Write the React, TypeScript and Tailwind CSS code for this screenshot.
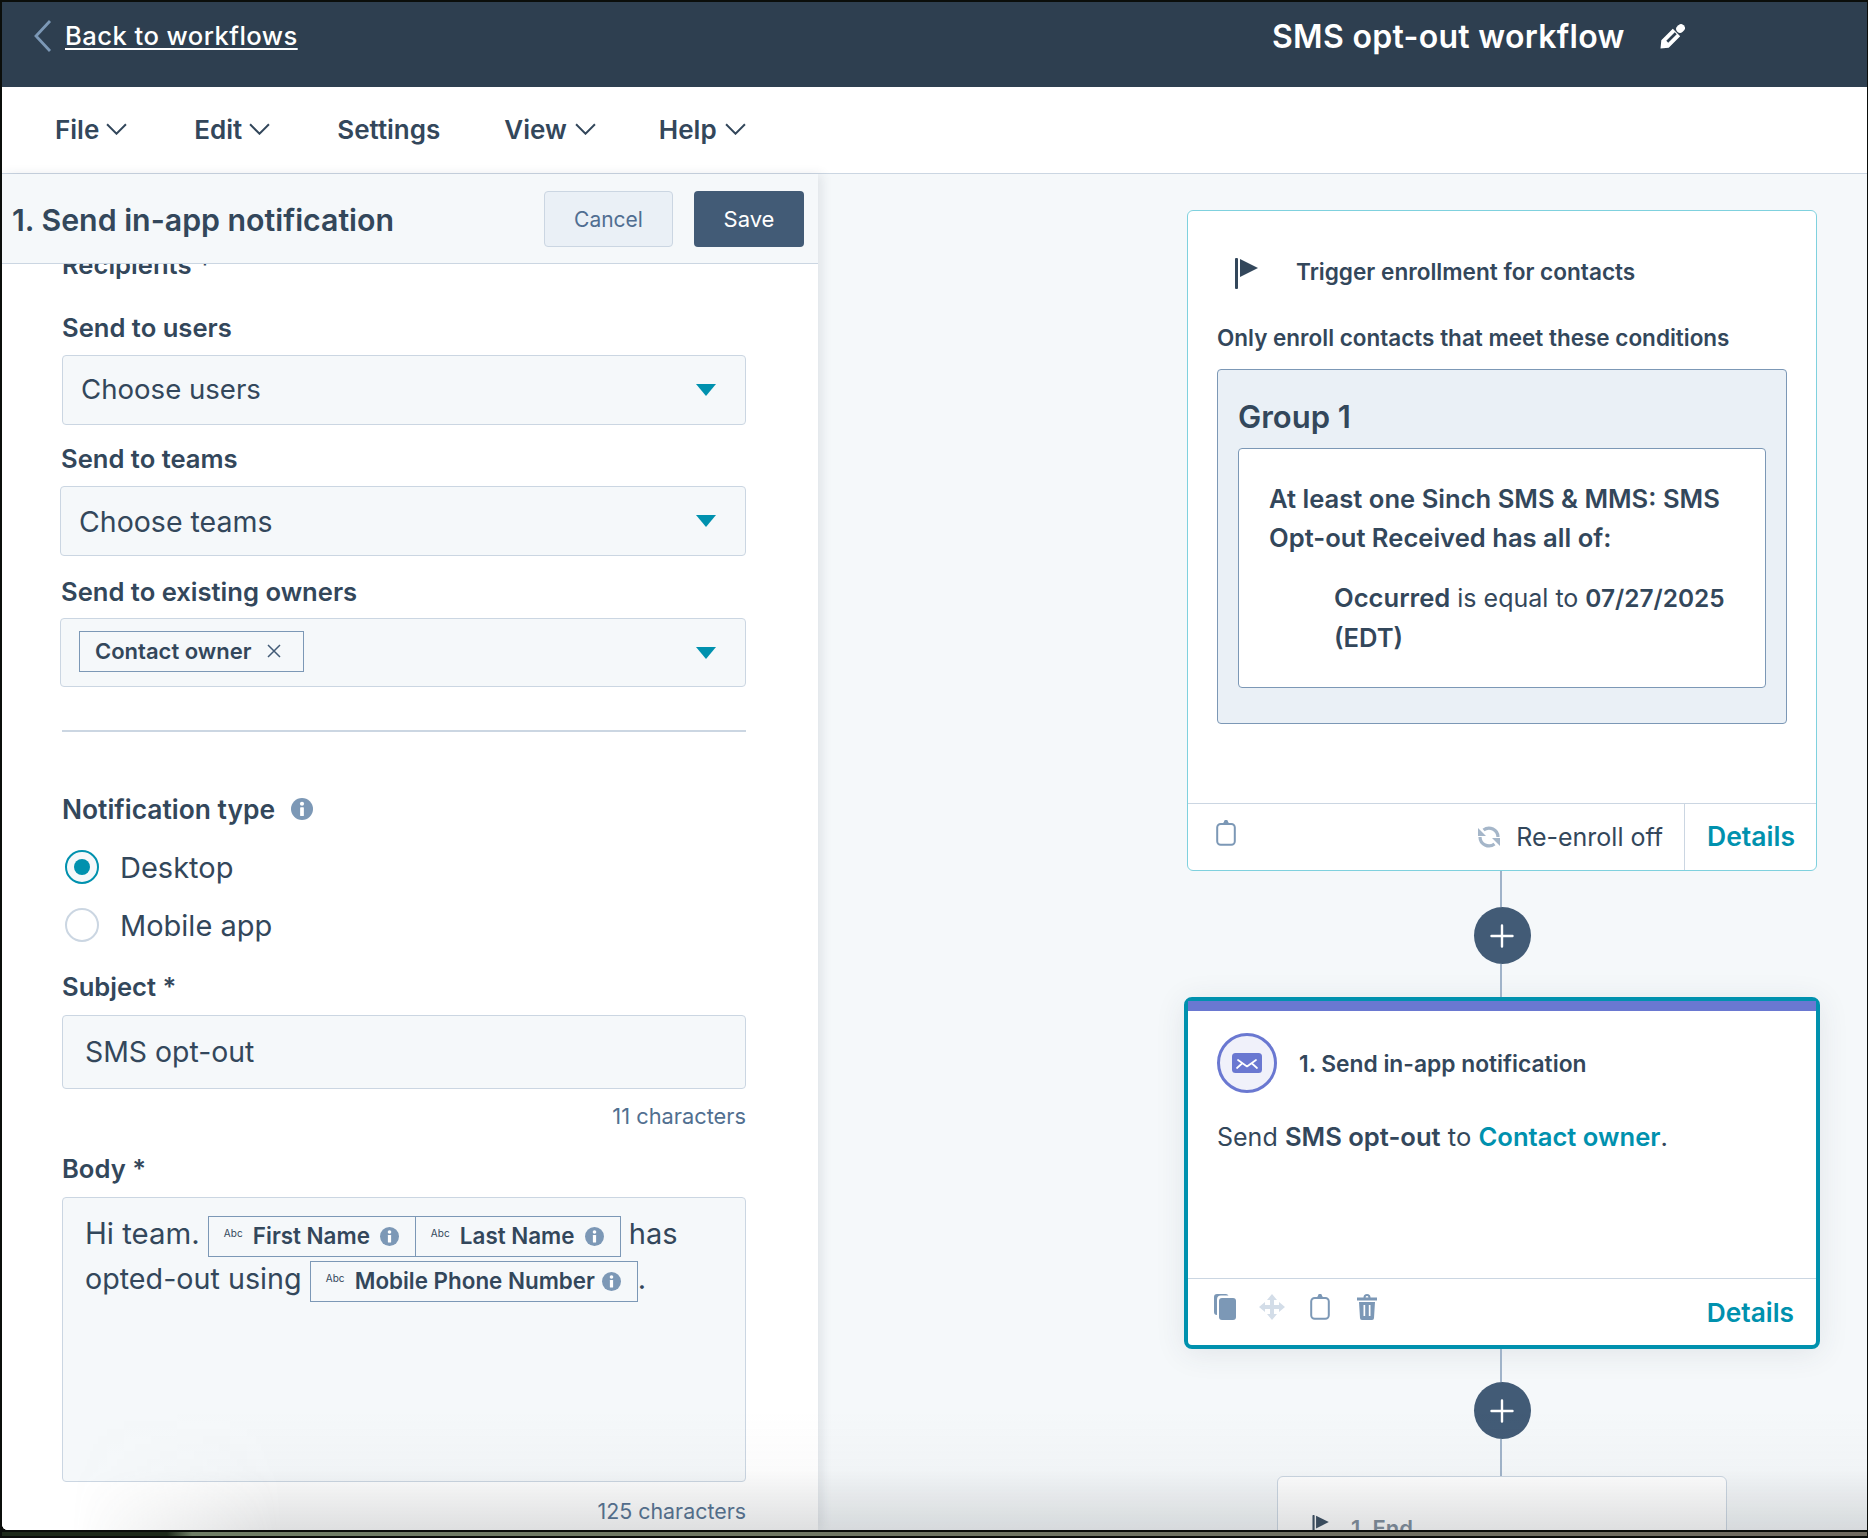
import React from "react";

const Chevron = ({ className = "" }: { className?: string }) => (
  <svg viewBox="0 0 20 11" className={className} fill="none" stroke="currentColor" strokeWidth="1.9">
    <path d="M1 1 L10 10 L19 1" />
  </svg>
);

const Caret = ({ className = "" }: { className?: string }) => (
  <svg viewBox="0 0 20 12" className={`w-[20px] h-[12px] text-[#0091ae] ${className}`} fill="currentColor">
    <path d="M0 0 H20 L10 12 Z" />
  </svg>
);

const Info = ({ className = "" }: { className?: string }) => (
  <svg viewBox="0 0 20 20" className={className}>
    <circle cx="10" cy="10" r="10" fill="#7c98b6" />
    <circle cx="10" cy="5.2" r="1.9" fill="#fff" />
    <rect x="8.3" y="8.4" width="3.4" height="8" rx="0.6" fill="#fff" />
  </svg>
);

const Clipboard = ({ className = "" }: { className?: string }) => (
  <svg viewBox="0 0 20 26" className={className} fill="none" stroke="#7c98b6" strokeWidth="2">
    <rect x="1.2" y="4" width="17.6" height="20.8" rx="3.5" />
    <path d="M6.5 4 L8 1.8 A2 2 0 0 1 12 1.8 L13.5 4 Z" fill="#7c98b6" stroke="none" />
  </svg>
);

const Flag = ({ className = "" }: { className?: string }) => (
  <svg viewBox="0 0 24 31" className={className} fill="#33475b">
    <rect x="0" y="0" width="3" height="31" rx="1" />
    <path d="M5 1 L23 10 L5 19 Z" />
  </svg>
);

const Plus = () => (
  <div className="w-[57px] h-[57px] rounded-full bg-[#425b76] flex items-center justify-center shrink-0">
    <svg viewBox="0 0 24 24" className="w-[24px] h-[24px]" stroke="#fff" strokeWidth="2.4" strokeLinecap="round">
      <path d="M12 1.5 V22.5 M1.5 12 H22.5" />
    </svg>
  </div>
);

const Label = ({ children, className = "", high = false }: { children: React.ReactNode; className?: string; high?: boolean }) => (
  <div className={`h-[30px] ${high ? "leading-[29px]" : "leading-[31px]"} text-[25.6px] font-semibold text-[#33475b] whitespace-nowrap ${className}`}>{children}</div>
);

const Select = ({ text, className = "", textClass = "" }: { text: string; className?: string; textClass?: string }) => (
  <div className={`flex items-center justify-between rounded-[4px] border border-[#cbd6e2] bg-[#f5f8fa] pr-[29px] ${className}`}>
    <span className={`text-[#33475b] ${textClass}`}>{text}</span>
    <Caret />
  </div>
);

const Chip = ({ name, className = "" }: { name: string; className?: string }) => (
  <span className={`inline-flex items-center h-[41px] border border-[#7c98b6] pl-[15px] pr-[16px] align-top mt-[4px] ${className}`}>
    <span className="text-[10px] leading-none text-[#33475b] -mt-[8px] w-[22px] shrink-0">Abc</span>
    <span className="text-[22.4px] font-semibold text-[#33475b] leading-none ml-[7px] whitespace-nowrap grow">{name}</span>
    <Info className="w-[19px] h-[19px] shrink-0 ml-[4px]" />
  </span>
);

export default function App() {
  return (
    <div className="relative w-[1868px] h-[1538px] overflow-hidden bg-[#0b0e0b] pt-[2px] pl-[2px] pr-[1px] font-['Inter','Liberation_Sans',sans-serif] text-[#33475b]">
      <div className="w-[1865px] h-[1528px] bg-white flex flex-col overflow-hidden rounded-bl-[6px]">
        {/* top bar */}
        <header className="h-[85px] shrink-0 bg-[#2e3f50] flex text-white">
          <div className="flex items-start pl-[32px] pt-[18px] w-[1270px]">
            <svg viewBox="0 0 18 32" className="w-[18px] h-[32px]" fill="none" stroke="#7c98b6" strokeWidth="2.8">
              <path d="M16 1 L2 16 L16 31" />
            </svg>
            <a className="ml-[13px] text-[25.6px] leading-[32px] font-medium underline underline-offset-[3px] decoration-2 tracking-[0.45px]">Back to workflows</a>
          </div>
          <div className="flex items-start pt-[16px]">
            <span className="text-[32px] leading-[38px] font-semibold whitespace-nowrap tracking-[0.3px]">SMS opt-out workflow</span>
            <svg viewBox="0 0 25 25" className="ml-[35px] mt-[6px] w-[25px] h-[25px]" fill="#fff">
              <path d="M12.8 4.8 L20.2 12.2 L8.7 23.7 L0.5 24.5 L1.3 16.3 Z M14.8 8.3 L6.3 16.8 L8.2 18.7 L16.7 10.2 Z" fillRule="evenodd" />
              <line x1="20" y1="5" x2="21" y2="4" stroke="#fff" strokeWidth="7.6" strokeLinecap="round" />
            </svg>
          </div>
        </header>

        {/* menu */}
        <nav className="h-[87px] shrink-0 bg-white border-b border-[#cbd6e2] flex items-center pl-[53px] pb-[2px] text-[26px] font-semibold text-[#33475b]">
          <span>File</span>
          <Chevron className="w-[21px] h-[12px] ml-[7px] mr-[67px]" />
          <span>Edit</span>
          <Chevron className="w-[21px] h-[12px] ml-[7px] mr-[67px]" />
          <span className="mr-[64px]">Settings</span>
          <span>View</span>
          <Chevron className="w-[21px] h-[12px] ml-[8px] mr-[63px]" />
          <span>Help</span>
          <Chevron className="w-[21px] h-[12px] ml-[8px]" />
        </nav>

        <div className="flex flex-1 min-h-0 bg-[#f5f8fa]">
          {/* left panel */}
          <aside className="relative z-10 w-[816px] shrink-0 bg-white flex flex-col shadow-[4px_0_10px_rgba(45,62,80,0.10)]">
            <div className="h-[90px] shrink-0 bg-[#f5f8fa] border-b border-[#cbd6e2] flex items-center pl-[10px] relative z-10">
              <h1 className="text-[30.3px] font-semibold text-[#33475b] whitespace-nowrap mt-[4px]">1. Send in-app notification</h1>
              <div className="ml-auto flex gap-[21px] mr-[14px] mt-[1px]">
                <button className="w-[129px] h-[56px] rounded-[4px] border border-[#cbd6e2] bg-[#eaf0f6] text-[#506e91] text-[21px] pt-[1px]">Cancel</button>
                <button className="w-[110px] h-[56px] rounded-[4px] bg-[#425b76] text-white text-[22px]">Save</button>
              </div>
            </div>
            <div className="flex-1 min-h-0 overflow-hidden pl-[60px] w-[744px]">
              <Label high className="-mt-[14px]">Recipients *</Label>
              <Label high className="mt-[33px]">Send to users</Label>
              <Select text="Choose users" textClass="text-[27.6px]" className="mt-[12px] h-[70px] pl-[18px] w-[684px]" />
              <Label high className="mt-[19px] -ml-[1px]">Send to teams</Label>
              <Select text="Choose teams" textClass="text-[28.5px] mt-[2px]" className="mt-[12px] h-[70px] pl-[18px] w-[686px] -ml-[2px]" />
              <Label high className="mt-[21px] -ml-[1px]">Send to existing owners</Label>
              <div className="mt-[11px] h-[69px] w-[686px] -ml-[2px] rounded-[4px] border border-[#cbd6e2] bg-[#f5f8fa] flex items-center justify-between pl-[18px] pr-[29px]">
                <span className="h-[41px] w-[225px] -mt-[3px] border border-[#7c98b6] flex items-center pl-[15px] text-[22px] font-semibold whitespace-nowrap">
                  Contact owner
                  <svg viewBox="0 0 14 14" className="w-[14px] h-[14px] ml-[16px]" stroke="#425b76" strokeWidth="1.5"><path d="M1 1 L13 13 M13 1 L1 13" /></svg>
                </span>
                <Caret />
              </div>
              <div className="mt-[43px] h-[2px] w-[684px] bg-[#cbd6e2]" />
              <Label className="mt-[62px] flex items-center text-[26.4px]">
                Notification type
                <Info className="w-[22px] h-[22px] ml-[16px]" />
              </Label>
              <div className="mt-[26px] flex items-center h-[34px] pl-[3px]">
                <span className="w-[34px] h-[34px] rounded-full border-2 border-[#0091ae] bg-[#f5f8fa] flex items-center justify-center">
                  <span className="w-[16px] h-[16px] rounded-full bg-[#0091ae]" />
                </span>
                <span className="ml-[21px] text-[29px] leading-[38px] mt-[2px]">Desktop</span>
              </div>
              <div className="mt-[24px] flex items-center h-[34px] pl-[3px]">
                <span className="w-[34px] h-[34px] rounded-full border-2 border-[#cbd6e2] bg-white" />
                <span className="ml-[21px] text-[29px] leading-[38px] mt-[2px]">Mobile app</span>
              </div>
              <Label className="mt-[29px]">Subject *</Label>
              <div className="mt-[14px] h-[74px] w-[684px] rounded-[4px] border border-[#cbd6e2] bg-[#f5f8fa] flex items-center pl-[22px] text-[28.4px]">SMS opt-out</div>
              <div className="mt-[15px] h-[24px] leading-[24px] w-[684px] text-right text-[21.8px] text-[#516f90]">11 characters</div>
              <Label high className="mt-[26px]">Body *</Label>
              <div className="mt-[13px] h-[285px] w-[684px] rounded-[4px] border border-[#cbd6e2] bg-[#f5f8fa] pl-[22px] pt-[14px] text-[29px] leading-[43px] whitespace-nowrap">
                <span className="text-[29.4px]">Hi team.</span>{" "}
                <Chip name="First Name" className="w-[208px]" />
                <Chip name="Last Name" className="w-[206px] -ml-[1px]" />
                <span className="ml-[8px]">has</span>
                <br />
                <span className="text-[28.7px]">opted-out using</span>{" "}
                <Chip name="Mobile Phone Number" className="w-[328px]" />
                <span>.</span>
              </div>
              <div className="mt-[17px] h-[24px] leading-[24px] w-[684px] text-right text-[21.4px] text-[#516f90]">125 characters</div>
            </div>
          </aside>

          {/* canvas */}
          <main className="flex-1 min-w-0 overflow-hidden pt-[36px] pl-[369px]">
            <div className="w-[630px] flex flex-col items-center">
              <section className="w-[630px] h-[661px] shrink-0 rounded-[6px] border border-[#7fd1de] bg-white flex flex-col">
                <div className="flex items-center h-[30px] mt-[47px] pl-[47px]">
                  <Flag className="w-[24px] h-[31px]" />
                  <span className="ml-[37px] text-[22.6px] font-semibold -mt-[2px]">Trigger enrollment for contacts</span>
                </div>
                <p className="mt-[35px] pl-[29px] text-[22.5px] font-semibold leading-[30px]">Only enroll contacts that meet these conditions</p>
                <div className="mt-[16px] ml-[29px] w-[570px] h-[355px] rounded-[4px] border border-[#7c98b6] bg-[#eaf0f6] pt-[29px] pl-[20px]">
                  <div className="text-[31px] font-semibold leading-[36px]">Group 1</div>
                  <div className="mt-[13px] w-[528px] h-[240px] rounded-[4px] border border-[#7c98b6] bg-white pl-[30px] pt-[30px] text-[25px] leading-[39px]">
                    <p className="font-semibold text-[25.6px]">At least one Sinch SMS &amp; MMS: SMS<br />Opt-out Received has all of:</p>
                    <p className="mt-[21px] ml-[65px] whitespace-nowrap"><b className="font-semibold text-[25.6px]">Occurred</b> is equal to <b className="font-semibold text-[24.4px]">07/27/2025</b><br /><b className="font-semibold text-[25.6px]">(EDT)</b></p>
                  </div>
                </div>
                <div className="mt-auto h-[67px] border-t border-[#cbd6e2] flex items-stretch">
                  <div className="flex-1 flex items-center pl-[28px]">
                    <Clipboard className="w-[20px] h-[26px] -mt-[8px]" />
                    <svg viewBox="0 0 24 24" className="ml-auto w-[24px] h-[24px]" fill="none" stroke="#a5b6c9" strokeWidth="3.2">
                      <path d="M21 12 A9 9 0 0 0 6.5 5" />
                      <path d="M1 3 L1 11 L9 11 Z" fill="#a5b6c9" stroke="none" />
                      <path d="M3 12 A9 9 0 0 0 17.5 19" />
                      <path d="M23 21 L23 13 L15 13 Z" fill="#a5b6c9" stroke="none" />
                    </svg>
                    <span className="ml-[15px] mr-[21px] text-[25px] mt-[2px]">Re-enroll off</span>
                  </div>
                  <div className="w-[132px] border-l border-[#cbd6e2] flex items-center pl-[22px] text-[26.5px] font-semibold text-[#0091ae]">Details</div>
                </div>
              </section>

              <div className="w-[2px] h-[36px] bg-[#a0b3c9] shrink-0 -translate-x-[1px]" />
              <Plus />
              <div className="w-[2px] h-[33px] bg-[#a0b3c9] shrink-0 -translate-x-[1px]" />

              <section className="w-[636px] h-[352px] shrink-0 rounded-[8px] border-[4px] border-[#0091ae] bg-white flex flex-col shadow-[0_4px_30px_rgba(45,62,80,0.10)]">
                <div className="h-[10px] bg-[#6a78d1] shrink-0" />
                <div className="flex items-center mt-[22px] pl-[29px]">
                  <span className="w-[60px] h-[60px] rounded-full border-[3px] border-[#6a78d1] bg-[#f0f1fa] flex items-center justify-center shrink-0">
                    <svg viewBox="0 0 30 20" className="w-[30px] h-[20px]">
                      <rect width="30" height="20" rx="3.5" fill="#6a78d1" />
                      <path d="M6 7 L15 13.5 L24 7 M5 15 L10 10.5 M25 15 L20 10.5" fill="none" stroke="#fff" strokeWidth="1.7" strokeLinecap="round" strokeLinejoin="round" />
                    </svg>
                  </span>
                  <span className="ml-[22px] text-[22.8px] font-semibold mt-[2px]">1. Send in-app notification</span>
                </div>
                <p className="mt-[27px] pl-[29px] text-[25.6px] leading-[34px] whitespace-nowrap">
                  <span className="text-[25px]">Send</span> <b className="font-semibold">SMS opt-out</b> to <span className="font-semibold text-[#0091ae]">Contact owner</span>.
                </p>
                <div className="mt-auto h-[67px] border-t border-[#cbd6e2] flex items-start pl-[26px] pr-[22px] pt-[15px]">
                  <svg viewBox="0 0 22 26" className="w-[22px] h-[26px]" fill="#7c98b6">
                    <path d="M3 0 H12 A3 3 0 0 1 14.5 1.5 H7 A4 4 0 0 0 3 5.5 V21 A3 3 0 0 1 0 18 V3 A3 3 0 0 1 3 0 Z" />
                    <rect x="5" y="4" width="17" height="22" rx="3" />
                  </svg>
                  <svg viewBox="0 0 26 26" className="ml-[23px] w-[26px] h-[26px]" fill="#d3dde8">
                    <path d="M13 0 L18 6 H15 V11 H20 V8 L26 13 L20 18 V15 H15 V20 H18 L13 26 L8 20 H11 V15 H6 V18 L0 13 L6 8 V11 H11 V6 H8 Z" />
                  </svg>
                  <Clipboard className="ml-[25px] w-[20px] h-[26px]" />
                  <svg viewBox="0 0 20 26" className="ml-[27px] w-[20px] h-[26px]" fill="#7c98b6">
                    <path d="M6.5 3.5 A3.5 3.5 0 0 1 13.5 3.5 H20 V6.5 H0 V3.5 Z M8.6 3.5 H11.4 A1.4 1.4 0 0 0 8.6 3.5 Z" fillRule="evenodd" />
                    <path d="M2 8 H18 L17 24 A2 2 0 0 1 15 26 H5 A2 2 0 0 1 3 24 Z M6.5 11 V22 H8.2 V11 Z M11.8 11 V22 H13.5 V11 Z" fillRule="evenodd" />
                  </svg>
                  <span className="ml-auto mt-[2px] text-[26.3px] font-semibold text-[#0091ae] leading-[34px]">Details</span>
                </div>
              </section>

              <div className="w-[2px] h-[33px] bg-[#a0b3c9] shrink-0 -translate-x-[1px]" />
              <Plus />
              <div className="w-[2px] h-[37px] bg-[#a0b3c9] shrink-0 -translate-x-[1px]" />

              <section className="w-[450px] h-[200px] shrink-0 rounded-[6px] border border-[#cbd6e2] bg-white pl-[33px] pt-[38px] flex items-start">
                <Flag className="w-[20px] h-[22px]" />
                <span className="ml-[20px] text-[22px] font-semibold text-[#7c8a99] leading-[26px]">1. End</span>
              </section>
            </div>
          </main>
        </div>
      </div>

      {/* fade at the bottom of the window, over the page */}
      <div className="absolute left-[2px] right-[1px] top-[1410px] h-[120px] z-20 pointer-events-none bg-gradient-to-b from-transparent via-[rgba(120,125,130,0.03)] to-[rgba(90,95,100,0.20)] [mask-image:linear-gradient(to_right,transparent_70px,black_280px)]" />

      {/* sliver of desktop below the window */}
      <div className="absolute left-[2px] right-[1px] top-[1532px] h-[4px] z-30 bg-[linear-gradient(to_right,#1e2a1a_165px,#6f7e65_190px,#6f6a60)]" />
    </div>
  );
}
